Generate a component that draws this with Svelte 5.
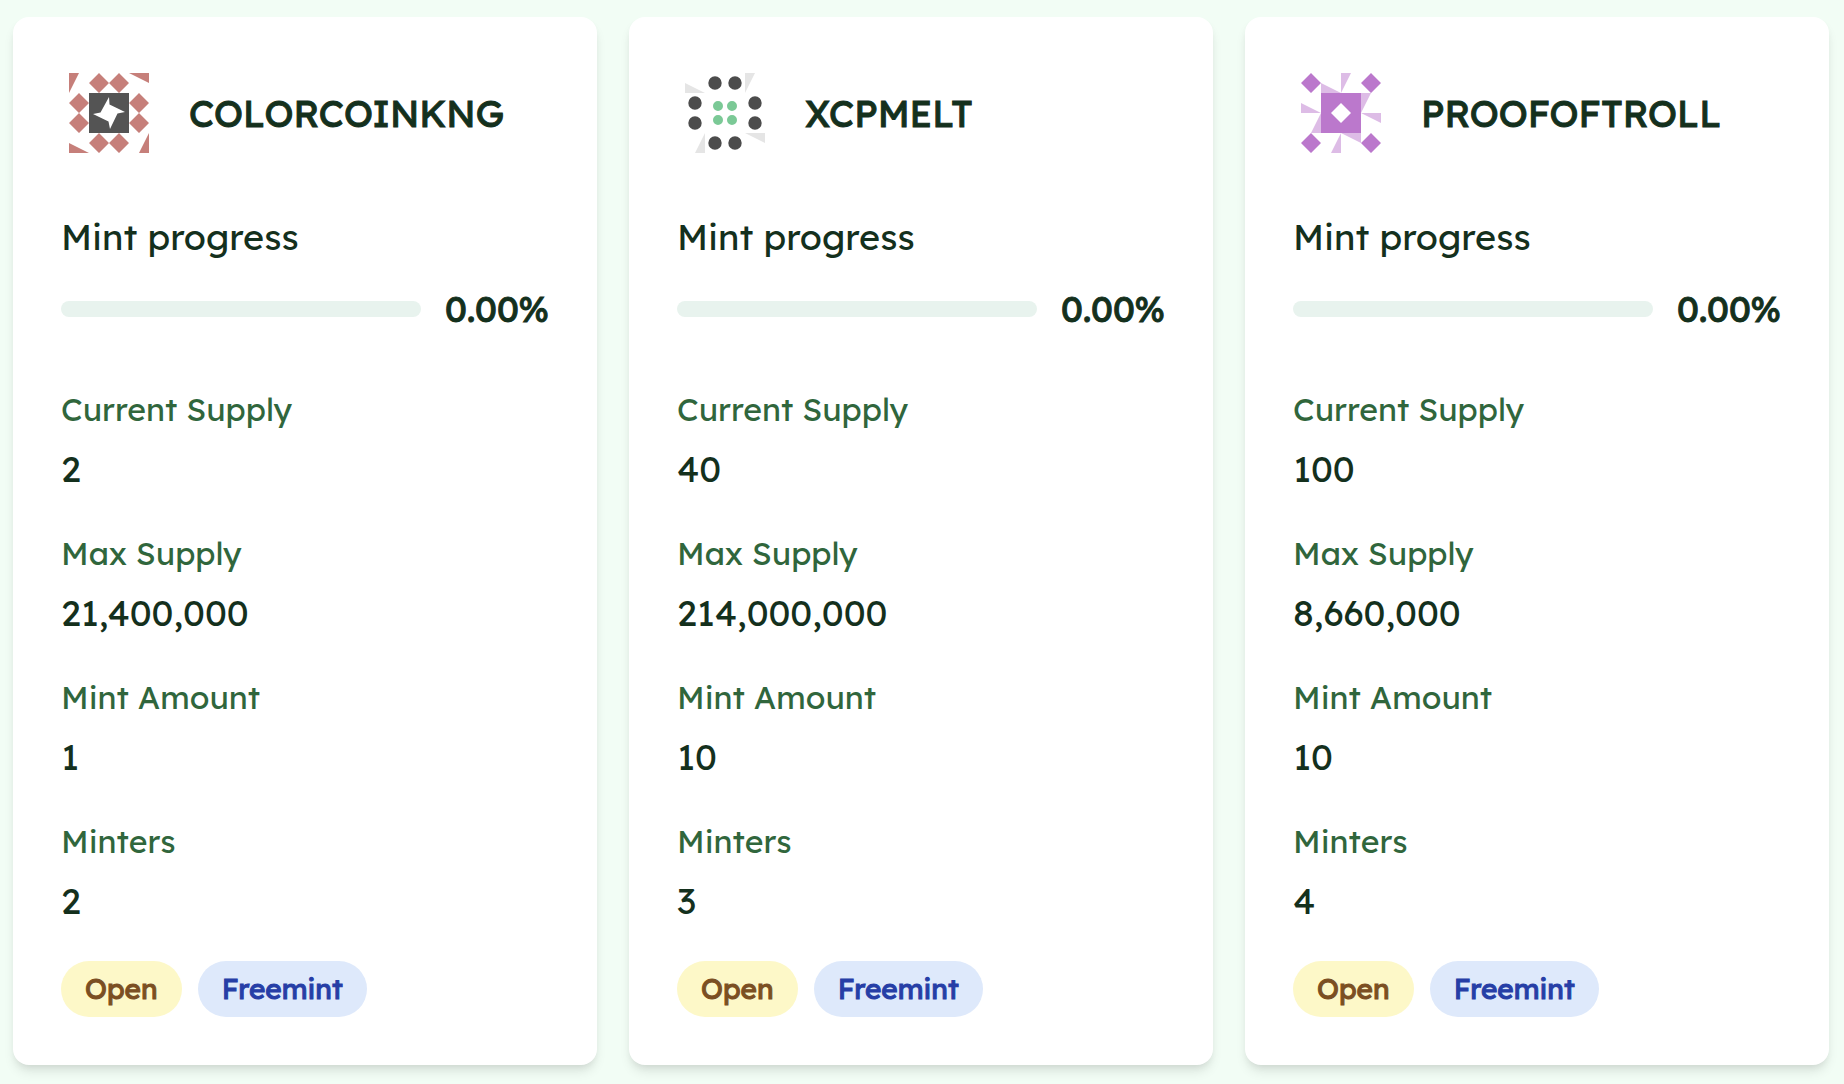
<script lang="ts">
	type Shape = {
		fill: string;
		d: string;
	};

	type Token = {
		name: string;
		progress: number;
		supply: number;
		maxSupply: number;
		mintAmount: number;
		minters: number;
		icon: Shape[];
	};

	const numberFormat = new Intl.NumberFormat("en-US");

	function diamond(x: number, y: number, r = 10): string {
		return `M${x} ${y - r}L${x + r} ${y}L${x} ${y + r}L${x - r} ${y}Z`;
	}

	function circle(x: number, y: number, r: number): string {
		return `M${x - r} ${y}a${r} ${r} 0 1 0 ${2 * r} 0a${r} ${r} 0 1 0 ${-2 * r} 0Z`;
	}

	// the eight side cells of the 4x4 identicon grid
	const sides = [[30, 10], [50, 10], [70, 30], [70, 50], [50, 70], [30, 70], [10, 50], [10, 30]];
	const corners = [[10, 10], [70, 10], [70, 70], [10, 70]];

	const tokens: Token[] = [
		{
			name: "COLORCOINKNG",
			progress: 0,
			supply: 2,
			maxSupply: 21400000,
			mintAmount: 1,
			minters: 2,
			icon: [
				{ fill: "#c67f7a", d: sides.map(([x, y]) => diamond(x, y)).join("") },
				{ fill: "#c67f7a", d: "M0 0H10L0 20ZM60 0H80V10ZM80 60V80H70ZM0 70L20 80H0Z" },
				{ fill: "#545454", d: "M20 20H60V60H20Z" },
				{ fill: "#fff", d: "M40 24L40.5 31.5L56 39L48.5 40.5L41 56L39.5 48.5L24 41L31.5 39.5Z" },
			],
		},
		{
			name: "XCPMELT",
			progress: 0,
			supply: 40,
			maxSupply: 214000000,
			mintAmount: 10,
			minters: 3,
			icon: [
				{ fill: "#4c4c4c", d: sides.map(([x, y]) => circle(x, y, 6.7)).join("") },
				{ fill: "#e5e5e5", d: "M0 10L20 20H0ZM60 0H70L60 20ZM60 60H80V70ZM20 60V80H10Z" },
				{ fill: "#7bc996", d: [[33, 33], [47, 33], [47, 47], [33, 47]].map(([x, y]) => circle(x, y, 5)).join("") },
			],
		},
		{
			name: "PROOFOFTROLL",
			progress: 0,
			supply: 100,
			maxSupply: 8660000,
			mintAmount: 10,
			minters: 4,
			icon: [
				{ fill: "#ddbce6", d: "M40 0H50L40 20ZM20 10L40 20H20ZM60 20H70L60 40ZM60 40H80V50ZM40 60V80H30ZM40 60H60V70ZM0 30L20 40H0ZM20 40V60H10Z" },
				{ fill: "#bb78cc", d: corners.map(([x, y]) => diamond(x, y)).join("") },
				{ fill: "#bb78cc", d: "M20 20H60V60H20Z" },
				{ fill: "#fff", d: diamond(40, 40) },
			],
		},
	];

	function stats(token: Token) {
		return [
			{ label: "Current Supply", value: token.supply },
			{ label: "Max Supply", value: token.maxSupply },
			{ label: "Mint Amount", value: token.mintAmount },
			{ label: "Minters", value: token.minters },
		];
	}
</script>

<main class="token-grid">
	{#each tokens as token}
		<article class="card">
			<header class="card-header">
				<svg class="identicon" viewBox="-8 -8 96 96" aria-hidden="true">
					{#each token.icon as shape}
						<path fill={shape.fill} d={shape.d} />
					{/each}
				</svg>
				<h2>{token.name}</h2>
			</header>

			<section class="progress">
				<label for="progress-{token.name}">Mint progress</label>
				<div class="progress-row">
					<progress id="progress-{token.name}" max="100" value={token.progress}></progress>
					<span class="percent">{token.progress.toFixed(2)}%</span>
				</div>
			</section>

			<dl class="stats">
				{#each stats(token) as stat}
					<div class="stat">
						<dt>{stat.label}</dt>
						<dd>{numberFormat.format(stat.value)}</dd>
					</div>
				{/each}
			</dl>

			<div class="badges">
				<span class="badge open">Open</span>
				<span class="badge freemint">Freemint</span>
			</div>
		</article>
	{/each}
</main>

<style>
	:global(body) {
		background: #f2fdf5;
	}

	.token-grid {
		display: grid;
		grid-template-columns: repeat(3, minmax(0, 1fr));
		gap: 32px;
		padding: 17px 15px 19px 13px;
		color: #14301d;
		font-family: Lexend, Inter, sans-serif;
	}

	.card {
		display: flex;
		flex-direction: column;
		padding: 48px;
		border-radius: 16px;
		background: #fff;
		box-shadow:
			0 8px 12px -2px rgba(0, 0, 0, 0.1),
			0 4px 8px -4px rgba(0, 0, 0, 0.1);
	}

	.card-header {
		display: flex;
		align-items: center;
		gap: 32px;
		margin-bottom: 48px;
	}

	.identicon {
		flex: none;
		width: 96px;
		height: 96px;
	}

	/* emphasis thickens the regular cut so its advance widths stay the same */
	h2,
	.percent,
	.badge {
		font-weight: 400;
		-webkit-text-stroke: 1px currentColor;
	}

	h2 {
		margin: 0;
		font-size: 37px;
		line-height: 56px;
	}

	.progress {
		display: grid;
		gap: 16px;
		margin-bottom: 48px;
		font-size: 36px;
		line-height: 56px;
	}

	.progress-row {
		display: flex;
		align-items: center;
		gap: 24px;
	}

	progress {
		flex: 1;
		min-width: 0;
		height: 16px;
		border: 0;
		border-radius: 8px;
		background: #e8f3ee;
		overflow: hidden;
		appearance: none;
	}

	progress::-webkit-progress-bar {
		background: #e8f3ee;
	}

	progress::-webkit-progress-value {
		background: #2f6b3f;
	}

	.stats {
		display: grid;
		gap: 32px;
		margin: 0 0 32px;
	}

	.stat {
		display: grid;
		gap: 8px;
	}

	dt {
		color: #30663c;
		font-size: 32px;
		line-height: 48px;
	}

	dd {
		margin: 0;
		font-size: 36px;
		line-height: 56px;
	}

	.badges {
		display: flex;
		gap: 16px;
	}

	.badge {
		padding: 8px 24px;
		border-radius: 28px;
		font-size: 28px;
		line-height: 40px;
	}

	.open {
		background: #fdf8c8;
		color: #7b4f22;
	}

	.freemint {
		background: #dee9fb;
		color: #263ea6;
	}
</style>
